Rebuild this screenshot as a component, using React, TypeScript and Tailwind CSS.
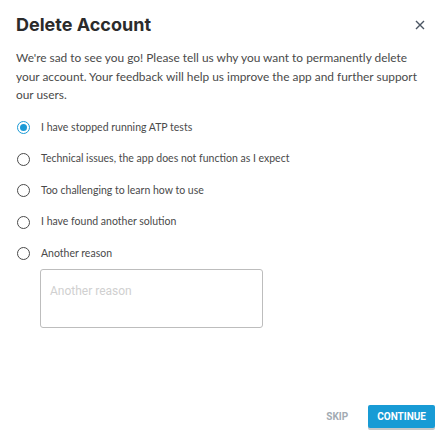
import { useState } from 'react'

const REASONS = [
  'I have stopped running ATP tests',
  'Technical issues, the app does not function as I expect',
  'Too challenging to learn how to use',
  'I have found another solution',
  'Another reason',
]

function Radio({ checked }: { checked: boolean }) {
  return (
    <span
      className={`flex h-[13px] w-[13px] shrink-0 items-center justify-center rounded-full border-[1.5px] ${
        checked ? 'border-[#1b9ad6]' : 'border-[#4a4a4a]'
      }`}
    >
      {checked && <span className="h-[7px] w-[7px] rounded-full bg-[#1b9ad6]" />}
    </span>
  )
}

export default function App() {
  const [reason, setReason] = useState(0)

  return (
    <div className="flex h-[440px] w-[443px] flex-col bg-white px-4 pt-[12px] pb-[12px] font-['Lato',sans-serif] text-[#333]">
      <div className="flex items-center justify-between">
        <h1 className="font-['Inter',sans-serif] text-[18px] font-bold leading-[26px] text-[#2b2b2b]">Delete Account</h1>
        <button className="mr-[2px] text-[#4b5563]" aria-label="Close">
          <svg width="10" height="10" viewBox="0 0 10 10" fill="none" stroke="currentColor" strokeWidth="1.4">
            <path d="M1 1l8 8M9 1l-8 8" />
          </svg>
        </button>
      </div>

      <p className="mt-[11px] text-[11.9px] leading-[18.5px] text-[#4a4a4a]">
        We're sad to see you go! Please tell us why you want to permanently delete your account. Your feedback will help us improve the app and further support our users.
      </p>

      <div className="mt-[14px] flex flex-col gap-[13.5px]">
        {REASONS.map((r, i) => (
          <label key={r} className="flex h-[18px] cursor-pointer items-center gap-[11px] pl-[1px] text-[10.5px] text-[#4a4a4a]" onClick={() => setReason(i)}>
            <Radio checked={reason === i} />
            <span>{r}</span>
          </label>
        ))}
      </div>

      <div className="ml-[24px] mt-[6px]">
        <textarea
          placeholder="Another reason"
          className="block h-[59px] w-[223px] resize-none rounded-[3px] border border-[#bdbdbd] px-[9px] pt-[14px] font-['Roboto',sans-serif] text-[12px] leading-[14px] outline-none placeholder:text-[#d0d0d0]"
        />
      </div>

      <div className="-mr-2 mt-auto flex items-center justify-end gap-[20px] font-['Roboto',sans-serif] text-[10px] font-bold">
        <button className="text-[#a3abb3]">SKIP</button>
        <button className="h-[23px] rounded-[2px] bg-[#189bd5] px-[9px] text-white shadow-[0_2px_0_#c8c8c8]">CONTINUE</button>
      </div>
    </div>
  )
}
